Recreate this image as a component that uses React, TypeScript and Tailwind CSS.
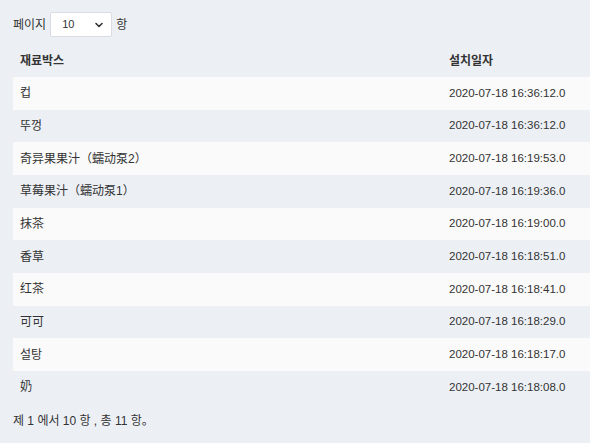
import React from "react";

const rows: [string, string][] = [
  ["컵", "2020-07-18 16:36:12.0"],
  ["뚜껑", "2020-07-18 16:36:12.0"],
  ["奇异果果汁（蠕动泵2）", "2020-07-18 16:19:53.0"],
  ["草莓果汁（蠕动泵1）", "2020-07-18 16:19:36.0"],
  ["抹茶", "2020-07-18 16:19:00.0"],
  ["香草", "2020-07-18 16:18:51.0"],
  ["红茶", "2020-07-18 16:18:41.0"],
  ["可可", "2020-07-18 16:18:29.0"],
  ["설탕", "2020-07-18 16:18:17.0"],
  ["奶", "2020-07-18 16:18:08.0"],
];

export default function App() {
  return (
    <div
      className="w-[590px] h-[443px] bg-[#ecf0f5] text-[#333] text-[12px] overflow-hidden"
      style={{ fontFamily: '"Liberation Sans", "Noto Sans CJK KR", "Noto Sans CJK SC", sans-serif' }}
    >
      <div className="pl-[13px] pt-[12px]">
        <div className="flex items-center h-[25px]">
          <span>페이지</span>
          <div className="ml-[4px] w-[62px] h-[25px] bg-white border border-[#d9dde3] rounded-[2px] flex items-center justify-between pl-[11px] pr-[7px]">
            <span className="text-[11px]">10</span>
            <svg width="10" height="10" viewBox="0 0 10 10">
              <path d="M2 3.5 L5 6.5 L8 3.5" fill="none" stroke="#333" strokeWidth="1.6" strokeLinecap="round" strokeLinejoin="round" />
            </svg>
          </div>
          <span className="ml-[4px]">항</span>
        </div>
        <div className="mt-[7px]">
          <div className="grid grid-cols-[429px_1fr] h-[33px] items-center font-bold">
            <div className="px-[7px]">재료박스</div>
            <div className="px-[7px]">설치일자</div>
          </div>
          {rows.map((r, i) => (
            <div
              key={i}
              className={`grid grid-cols-[429px_1fr] h-[32.67px] items-center ${i % 2 === 0 ? "bg-[#fafafa]" : ""}`}
            >
              <div className="px-[7px]">{r[0]}</div>
              <div className="px-[7px] text-[11.5px]">{r[1]}</div>
            </div>
          ))}
        </div>
        <div className="mt-[8px]">제 1 에서 10 항 , 총 11 항。</div>
      </div>
    </div>
  );
}
